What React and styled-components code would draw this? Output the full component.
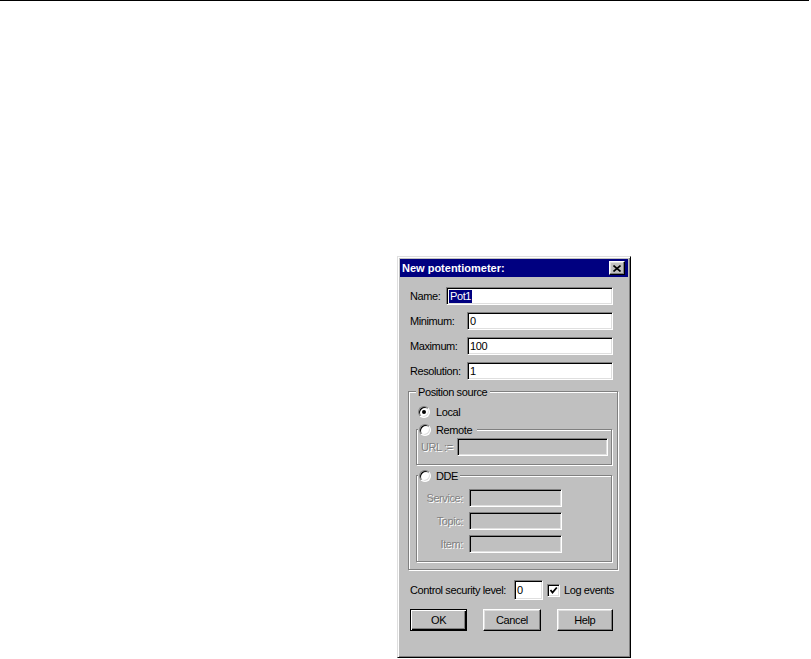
import React from 'react'
import styled, { createGlobalStyle, css } from 'styled-components'

const GlobalStyle = createGlobalStyle`
  html, body {
    margin: 0;
    padding: 0;
    background: #fff;
  }
  body {
    font-family: "Liberation Sans", Arial, sans-serif;
  }
`

const Page = styled.div`
  width: 809px;
  height: 659px;
  box-sizing: border-box;
  border-top: 1px solid #000;
  padding: 255px 0 0 397px;
  overflow: hidden;
`

const Dialog = styled.div`
  width: 234px;
  height: 402px;
  box-sizing: border-box;
  background: #c0c0c0;
  border: 1px solid;
  border-color: #dfdfdf #000 #000 #dfdfdf;
  box-shadow: inset 1px 1px #fff, inset -1px -1px #808080;
  padding: 2px;
  display: flex;
  flex-direction: column;
  font-size: 11px;
  letter-spacing: -0.4px;
  color: #000;
`

const TitleBar = styled.div`
  height: 18px;
  flex: none;
  background: #000080;
  display: flex;
  align-items: center;
  justify-content: space-between;
  padding: 0 3px 0 2px;
`

const Title = styled.span`
  color: #fff;
  font-weight: bold;
  font-size: 11px;
  letter-spacing: 0;
`

const CloseButton = styled.div`
  width: 16px;
  height: 14px;
  box-sizing: border-box;
  background: #c0c0c0;
  border: 1px solid;
  border-color: #fff #000 #000 #fff;
  box-shadow: inset -1px -1px #808080, inset 1px 1px #dfdfdf;
  display: flex;
  align-items: center;
  justify-content: center;
`

const Body = styled.div`
  flex: 1;
  display: flex;
  flex-direction: column;
  padding: 10px 15px 0 10px;
`

const Row = styled.div`
  display: flex;
  align-items: center;
  white-space: nowrap;
  height: ${p => p.$h || 18}px;
  margin-top: ${p => p.$mt || 0}px;
  margin-bottom: ${p => p.$mb ?? 7}px;
`

const Label = styled.span`
  width: ${p => p.$w}px;
  flex: none;
  white-space: nowrap;
  text-align: ${p => (p.$right ? 'right' : 'left')};
  padding-right: ${p => (p.$right ? 6 : 0)}px;
  box-sizing: border-box;
  ${p =>
    p.$disabled &&
    css`
      color: #808080;
      text-shadow: 1px 1px 0 #fff;
    `}
`

const Field = styled.div`
  height: ${p => p.$h || 18}px;
  width: ${p => (p.$w ? `${p.$w}px` : 'auto')};
  flex: ${p => (p.$w ? 'none' : '1')};
  box-sizing: border-box;
  background: ${p => (p.$disabled ? '#c0c0c0' : '#fff')};
  border: 1px solid;
  border-color: #808080 #fff #fff #808080;
  box-shadow: inset 1px 1px #000, inset -1px -1px #dfdfdf;
  display: flex;
  align-items: center;
  padding-left: 2px;
  white-space: nowrap;
`

const Selected = styled.span`
  background: #000080;
  color: #fff;
  padding: 0 1px;
  line-height: 13px;
`

const Group = styled.div`
  position: relative;
  border: 1px solid #808080;
  box-shadow: inset 1px 1px 0 #fff, 1px 1px 0 #fff;
  margin: ${p => p.$margin};
  padding: ${p => p.$padding};
  display: flex;
  flex-direction: column;
`

const Legend = styled.div`
  position: absolute;
  top: -7px;
  left: ${p => p.$left}px;
  height: 13px;
  background: #c0c0c0;
  padding: ${p => p.$pad};
  display: flex;
  align-items: center;
  gap: 5px;
  white-space: nowrap;
`

const Choice = styled.div`
  display: flex;
  align-items: center;
  gap: 6px;
  height: 14px;
  margin-bottom: ${p => p.$mb || 0}px;
`

const Radio = styled.span`
  width: 12px;
  height: 12px;
  flex: none;
  box-sizing: border-box;
  border-radius: 50%;
  background: #fff;
  border: 1px solid;
  border-color: #808080 #fff #fff #808080;
  box-shadow: inset 1px 1px #000, inset -1px -1px #dfdfdf;
  display: flex;
  align-items: center;
  justify-content: center;

  &::after {
    content: '';
    width: 4px;
    height: 4px;
    border-radius: 50%;
    background: ${p => (p.$checked ? '#000' : 'transparent')};
  }
`

const Check = styled.span`
  width: 13px;
  height: 13px;
  flex: none;
  box-sizing: border-box;
  background: #fff;
  border: 1px solid;
  border-color: #808080 #fff #fff #808080;
  box-shadow: inset 1px 1px #000, inset -1px -1px #dfdfdf;
  display: flex;
  align-items: center;
  justify-content: center;
  margin: 0 4px 0 4px;
`

const ButtonRow = styled.div`
  display: flex;
  gap: 16px;
  margin-top: 9px;
`

const Button = styled.div`
  width: ${p => p.$w}px;
  height: 22px;
  box-sizing: border-box;
  background: #c0c0c0;
  display: flex;
  align-items: center;
  justify-content: center;
  border: 1px solid;
  border-color: #fff #000 #000 #fff;
  box-shadow: inset -1px -1px #808080, inset 1px 1px #dfdfdf;
  ${p =>
    p.$default &&
    css`
      border: 1px solid #000;
      box-shadow: inset 1px 1px #fff, inset -1px -1px #000, inset -2px -2px #808080;
    `}
`

function CloseIcon() {
  return (
    <svg width="8" height="7" viewBox="0 0 8 7">
      <path d="M0.5 0.5 L7.5 6.5 M7.5 0.5 L0.5 6.5" stroke="#000" strokeWidth="1.6" />
    </svg>
  )
}

function CheckIcon() {
  return (
    <svg width="9" height="9" viewBox="0 0 9 9">
      <path d="M1.5 4 L3.5 6.5 L7.8 1.5" stroke="#000" strokeWidth="1.8" fill="none" />
    </svg>
  )
}

export default function App() {
  return (
    <Page>
      <GlobalStyle />
      <Dialog>
        <TitleBar>
          <Title>New potentiometer:</Title>
          <CloseButton>
            <CloseIcon />
          </CloseButton>
        </TitleBar>
        <Body>
          <Row>
            <Label $w={36}>Name:</Label>
            <Field>
              <Selected>Pot1</Selected>
            </Field>
          </Row>
          <Row>
            <Label $w={57}>Minimum:</Label>
            <Field>0</Field>
          </Row>
          <Row>
            <Label $w={57}>Maximum:</Label>
            <Field>100</Field>
          </Row>
          <Row $mb={0}>
            <Label $w={57}>Resolution:</Label>
            <Field>1</Field>
          </Row>

          <Group $margin="11px -5px 0 -2px" $padding="13px 5px 7px 9px">
            <Legend $left={7} $pad="0 3px 0 2px">Position source</Legend>
            <Choice $mb={10}>
              <Radio $checked />
              <span>Local</span>
            </Choice>

            <Group $margin="0 0 0 -2px" $padding="8px 3px 8px 4px">
              <Legend $left={1} $pad="0 5px 0 1px">
                <Radio />
                <span>Remote</span>
              </Legend>
              <Row $mb={0}>
                <Label $w={36} $disabled>URL :=</Label>
                <Field $disabled />
              </Row>
            </Group>

            <Group $margin="10px 0 0 -2px" $padding="13px 3px 8px 0">
              <Legend $left={1} $pad="0 2px 0 1px">
                <Radio />
                <span>DDE</span>
              </Legend>
              <Row $mb={5}>
                <Label $w={52} $right $disabled>Service:</Label>
                <Field $w={93} $disabled />
              </Row>
              <Row $mb={5}>
                <Label $w={52} $right $disabled>Topic:</Label>
                <Field $w={93} $disabled />
              </Row>
              <Row $mb={0}>
                <Label $w={52} $right $disabled>Item:</Label>
                <Field $w={93} $disabled />
              </Row>
            </Group>
          </Group>

          <Row $h={20} $mb={0} $mt={10}>
            <Label $w={104}>Control security level:</Label>
            <Field $w={29} $h={20}>0</Field>
            <Check>
              <CheckIcon />
            </Check>
            <span>Log events</span>
          </Row>

          <ButtonRow>
            <Button $w={58} $default>OK</Button>
            <Button $w={58}>Cancel</Button>
            <Button $w={57}>Help</Button>
          </ButtonRow>
        </Body>
      </Dialog>
    </Page>
  )
}
